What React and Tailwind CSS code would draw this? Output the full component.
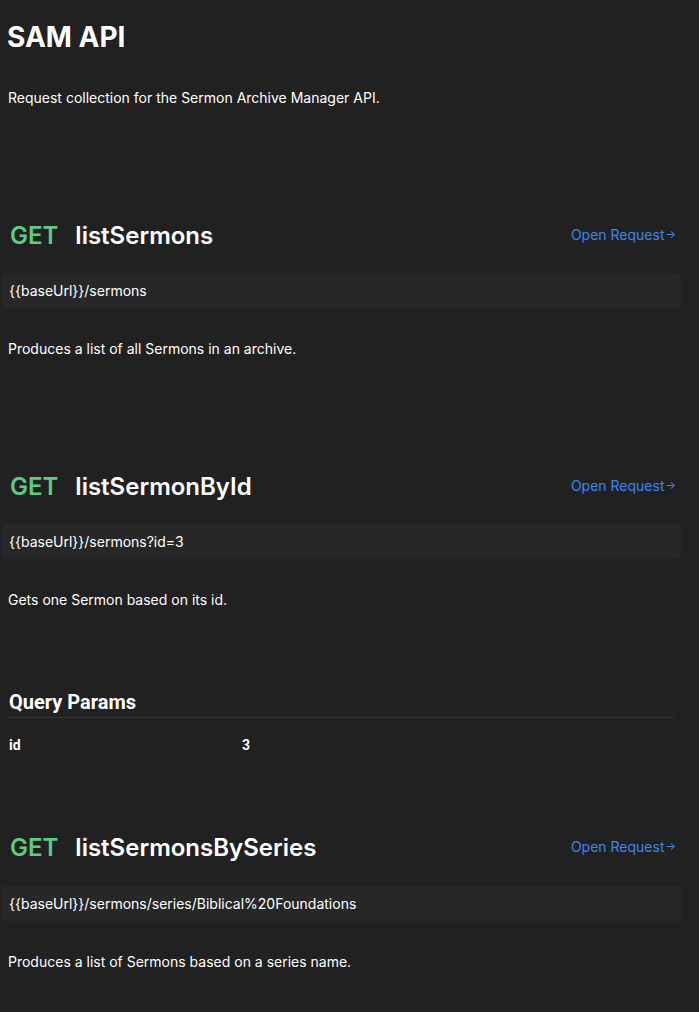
export default function App() {
  const inter = { fontFamily: "Inter, 'Noto Sans', sans-serif" };
  const Header = ({ name, className }) => (
    <div className={`flex items-center justify-between h-9 pl-[3px] pr-[23px] ${className}`}>
      <div className="flex items-center gap-[17px] text-[24px] font-semibold leading-9">
        <span className="text-[#5ccc86]">GET</span>
        <span className="text-white">{name}</span>
      </div>
      <a className="text-[14px] text-[#3d86f0] flex items-center mb-[3px]" href="#">
        Open Request<span className="text-[11px] ml-[1px]">→</span>
      </a>
    </div>
  );
  const Url = ({ children }) => (
    <div className="ml-[-5px] w-[679px] h-[35px] rounded-[3px] bg-[#272727] flex items-center pl-[7px] text-[14px] text-white">
      {children}
    </div>
  );
  return (
    <div className="min-h-screen w-full bg-[#212121] text-white pb-10" style={inter}>
      <div className="pl-[7px]">
        <h1 className="pt-[20px] text-[28px] font-bold leading-[34px]">SAM API</h1>
        <p className="mt-[34px] text-[14px] leading-5 pl-[1px]">
          Request collection for the Sermon Archive Manager API.
        </p>

        <Header name="listSermons" className="mt-[110px]" />
        <div className="mt-[19px]">
          <Url>{"{{baseUrl}}/sermons"}</Url>
        </div>
        <p className="mt-[31px] text-[14px] leading-5 pl-[1px]">
          Produces a list of all Sermons in an archive.
        </p>

        <Header name="listSermonById" className="mt-[110px]" />
        <div className="mt-[19px]">
          <Url>{"{{baseUrl}}/sermons?id=3"}</Url>
        </div>
        <p className="mt-[31px] text-[14px] leading-5 pl-[1px]">
          Gets one Sermon based on its id.
        </p>

        <div className="mt-[78px] w-[667px]" style={{ fontFamily: "Roboto, sans-serif" }}>
          <h2 className="text-[20px] font-bold leading-7 pb-[1px] border-b border-[#343434] pl-[2px]">
            Query Params
          </h2>
          <div className="mt-[17px] flex text-[14px] font-bold leading-5 pl-[2px]">
            <span className="w-[233px]">id</span>
            <span>3</span>
          </div>
        </div>

        <Header name="listSermonsBySeries" className="mt-[75px]" />
        <div className="mt-[20px]">
          <Url>{"{{baseUrl}}/sermons/series/Biblical%20Foundations"}</Url>
        </div>
        <p className="mt-[31px] text-[14px] leading-5 pl-[1px]">
          Produces a list of Sermons based on a series name.
        </p>
      </div>
    </div>
  );
}
